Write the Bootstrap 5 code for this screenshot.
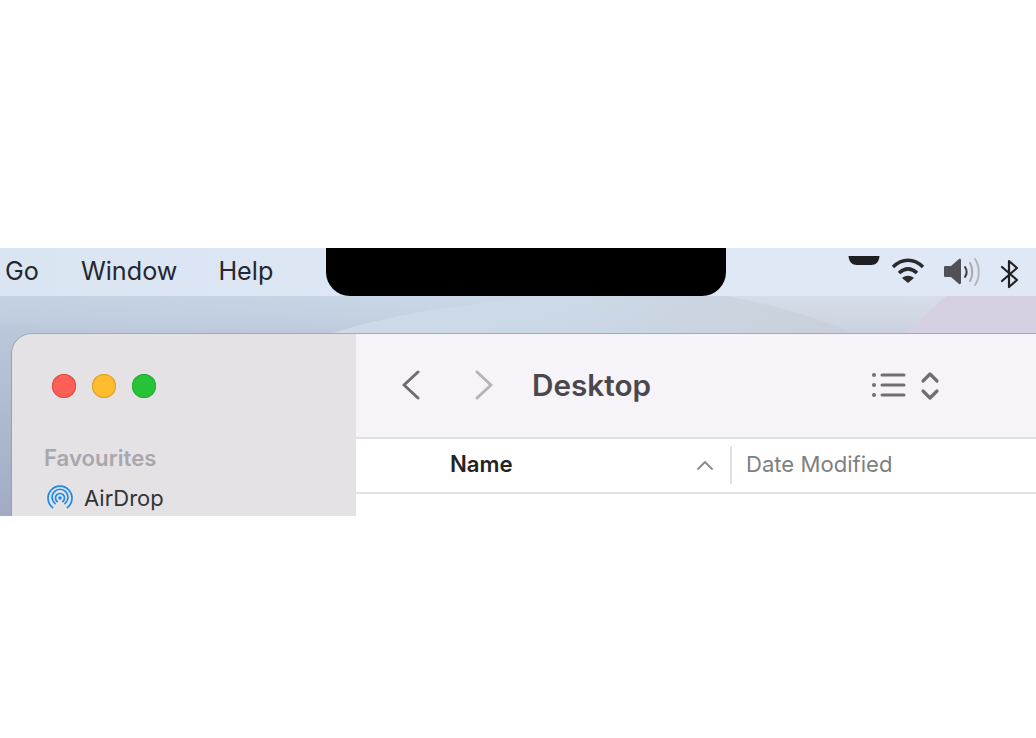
<!DOCTYPE html>
<html lang="en">
<head>
  <meta charset="UTF-8" />
  <title>Finder</title>
  <link href="https://cdn.jsdelivr.net/npm/bootstrap@5.3.0/dist/css/bootstrap.min.css" rel="stylesheet">
  <style>
    body { background: #fff; font-family: Inter, "Liberation Sans", sans-serif; overflow: hidden; }
    .shot { margin-top: 248px; height: 268px; position: relative; overflow: hidden;
      background:
        linear-gradient(180deg, transparent 48px, rgba(150,150,175,.08) 70px, rgba(125,128,160,.14) 86px, rgba(125,128,160,.48) 268px),
        linear-gradient(90deg, #c3d2e3 0, #c6d5e5 300px, #cbd9e7 520px, #d5dde8 800px, #d8dde9 1036px); }
    .wall-shape { position: absolute; left: 0; top: 48px; width: 1036px; height: 38px; }
    .menu-strip { height: 48px; background: linear-gradient(90deg, #dae5f2, #dfe7f5 50%, #e1e8f5); position: relative; color: #24272d; font-size: 25.2px; }
    .menu-left { width: 326px; padding-left: 5px; }
    .menu-left span:nth-child(1) { margin-right: 42px; }
    .menu-left span:nth-child(2) { margin-right: 41px; }
    .notch { width: 400px; height: 48px; background: #000; border-radius: 0 0 24px 24px; }
    .status-ico { position: absolute; top: 0; }
    .win { position: absolute; left: 12px; top: 86px; width: 1040px; height: 182px; border-top-left-radius: 20px; overflow: hidden; box-shadow: 0 -1px 0 #a6a9b4, -1px 0 0 #9a9fb2; }
    .side { width: 344px; background: #e5e2e6; }
    .lights { gap: 16px; padding: 40px 0 0 40px; }
    .light { width: 24px; height: 24px; border-radius: 50%; }
    .l-red { background: #fe5f57; box-shadow: inset 0 0 0 1px #e0483f; }
    .l-yel { background: #febc2e; box-shadow: inset 0 0 0 1px #dc9d20; }
    .l-grn { background: #28c238; box-shadow: inset 0 0 0 1px #1fae31; }
    .fav { margin: 46px 0 0 32px; font-size: 22.2px; font-weight: 600; color: #a9a7ab; line-height: 28px; }
    .drop { margin: 12px 0 0 35px; font-size: 22px; color: #333336; line-height: 28px; gap: 11px; }
    .main { flex: 1; background: #fff; }
    .tools { height: 105px; background: #f6f4f8; border-bottom: 2px solid #dfdee1; }
    .title-txt { font-size: 29.7px; font-weight: 600; color: #4a484c; position: absolute; left: 176px; top: 29px; line-height: 44px; }
    .tools svg { position: absolute; }
    .cols { height: 55px; border-bottom: 2px solid #e3e3e5; position: relative; }
    .col-name { position: absolute; left: 94px; top: 11px; font-size: 22.2px; font-weight: 600; color: #242426; line-height: 28px; }
    .col-date { position: absolute; left: 390px; top: 11px; font-size: 22.1px; color: #7f7f81; line-height: 28px; }
    .col-sep { position: absolute; left: 374px; top: 7px; width: 2px; height: 38px; background: #e0e0e2; }
    .cols svg { position: absolute; left: 341px; top: 20px; }
  </style>
</head>
<body>
<div class="shot">
  <!-- wallpaper hills -->
  <svg class="wall-shape" viewBox="0 0 1036 38">
    <defs><linearGradient id="hill" x1="0" x2="1" y1="0" y2="0"><stop offset="0" stop-color="#cfdce9"/><stop offset=".5" stop-color="#cbd8e5"/><stop offset="1" stop-color="#c9cfd9"/></linearGradient></defs>
    <path d="M330 38C380 22 450 8 540 2C620 -2 690 -2 726 0C770 8 820 22 855 38Z" fill="url(#hill)" opacity=".85"/>
    <path d="M903 38C925 22 935 8 947 0H1036V38Z" fill="#d6d0e2"/>
  </svg>

  <!-- menu bar -->
  <div class="menu-strip d-flex align-items-center">
    <div class="menu-left d-flex"><span>Go</span><span>Window</span><span>Help</span></div>
    <div class="notch align-self-start"></div>
    <svg class="status-ico" style="left:848px" width="32" height="20" viewBox="0 0 32 20"><path d="M0.5 8H31.500C31 14 28 17 23 17H9C4 17 1 14 0.500 8Z" fill="#1e1f22"/></svg>
    <svg class="status-ico" style="left:890px;top:8px" width="36" height="30" viewBox="0 0 36 30" fill="none" stroke="#2a2b2e" stroke-width="3.400"><path d="M3 11C12 2 24 2 33 11"/><path d="M9 17C15 11.500 21 11.500 27 17"/><path d="M18 27L12 22C16 19 20 19 24 22Z" fill="#2a2b2e" stroke="none"/></svg>
    <svg class="status-ico" style="left:943px;top:8px" width="40" height="32" viewBox="0 0 40 32" fill="none"><path d="M2 10H8L16 3C17 2.500 18 3 18 4V27C18 28 17 28.500 16 28L8 21H2C1 21 1 20 1 19V12C1 11 1 10 2 10Z" fill="#505156"/><path d="M22 11C24 14 24 18 22 21" stroke="#3b3c40" stroke-width="2" stroke-linecap="round"/><path d="M27 7C30 12 30 20 27 25" stroke="#a6a8ae" stroke-width="2" stroke-linecap="round"/><path d="M32 3C37 10 37 22 32 29" stroke="#b4b6bc" stroke-width="2" stroke-linecap="round"/></svg>
    <svg class="status-ico" style="left:999px;top:10px" width="22" height="32" viewBox="0 0 22 32" fill="none" stroke="#1f2024" stroke-width="2.200" stroke-linejoin="round" stroke-linecap="round"><path d="M3 9L18 22L10 29V3L18 10L3 23"/></svg>
  </div>

  <!-- finder window -->
  <div class="win d-flex">
    <div class="side">
      <div class="lights d-flex">
        <div class="light l-red"></div>
        <div class="light l-yel"></div>
        <div class="light l-grn"></div>
      </div>
      <div class="fav">Favourites</div>
      <div class="drop d-flex align-items-center">
        <svg width="26" height="26" viewBox="0 0 26 26" fill="none" stroke="#1c8ae8" stroke-width="1.700" stroke-linecap="round"><path d="M5.500 22.500A12 12 0 1 1 20.500 22.500"/><path d="M8 18.500A8 8 0 1 1 18 18.500"/><path d="M10.200 16.500A4.500 4.500 0 1 1 15.800 16.500"/><circle cx="13" cy="13" r="1.800" fill="#1c8ae8" stroke="none"/></svg>
        <span>AirDrop</span>
      </div>
    </div>
    <div class="main">
      <div class="tools position-relative">
        <svg style="left:45px;top:36px" width="20" height="30" viewBox="0 0 20 30" fill="none" stroke="#6e6d71" stroke-width="3" stroke-linecap="round" stroke-linejoin="round"><path d="M17 2L3 15L17 28"/></svg>
        <svg style="left:118px;top:36px" width="20" height="30" viewBox="0 0 20 30" fill="none" stroke="#b5b4b8" stroke-width="3" stroke-linecap="round" stroke-linejoin="round"><path d="M3 2L17 15L3 28"/></svg>
        <div class="title-txt">Desktop</div>
        <svg style="left:515px;top:38px" width="36" height="28" viewBox="0 0 36 28" fill="none" stroke="#6f6e72" stroke-width="3" stroke-linecap="round"><path d="M11 3H33M11 13H33M11 23H33"/><circle cx="3" cy="3" r="2" fill="#6f6e72" stroke="none"/><circle cx="3" cy="13" r="2" fill="#6f6e72" stroke="none"/><circle cx="3" cy="23" r="2" fill="#6f6e72" stroke="none"/></svg>
        <svg style="left:564px;top:36px" width="20" height="32" viewBox="0 0 20 32" fill="none" stroke="#6f6e72" stroke-width="3.200" stroke-linecap="round" stroke-linejoin="round"><path d="M3 11L10 4L17 11M3 21L10 28L17 21"/></svg>
      </div>
      <div class="cols">
        <div class="col-name">Name</div>
        <svg width="16" height="12" viewBox="0 0 16 12" fill="none" stroke="#8a8a8c" stroke-width="1.800" stroke-linecap="round" stroke-linejoin="round"><path d="M1 10L8 3L15 10"/></svg>
        <div class="col-sep"></div>
        <div class="col-date">Date Modified</div>
      </div>
    </div>
  </div>
</div>
<script src="https://cdn.jsdelivr.net/npm/bootstrap@5.3.0/dist/js/bootstrap.bundle.min.js"></script>
</body>
</html>
